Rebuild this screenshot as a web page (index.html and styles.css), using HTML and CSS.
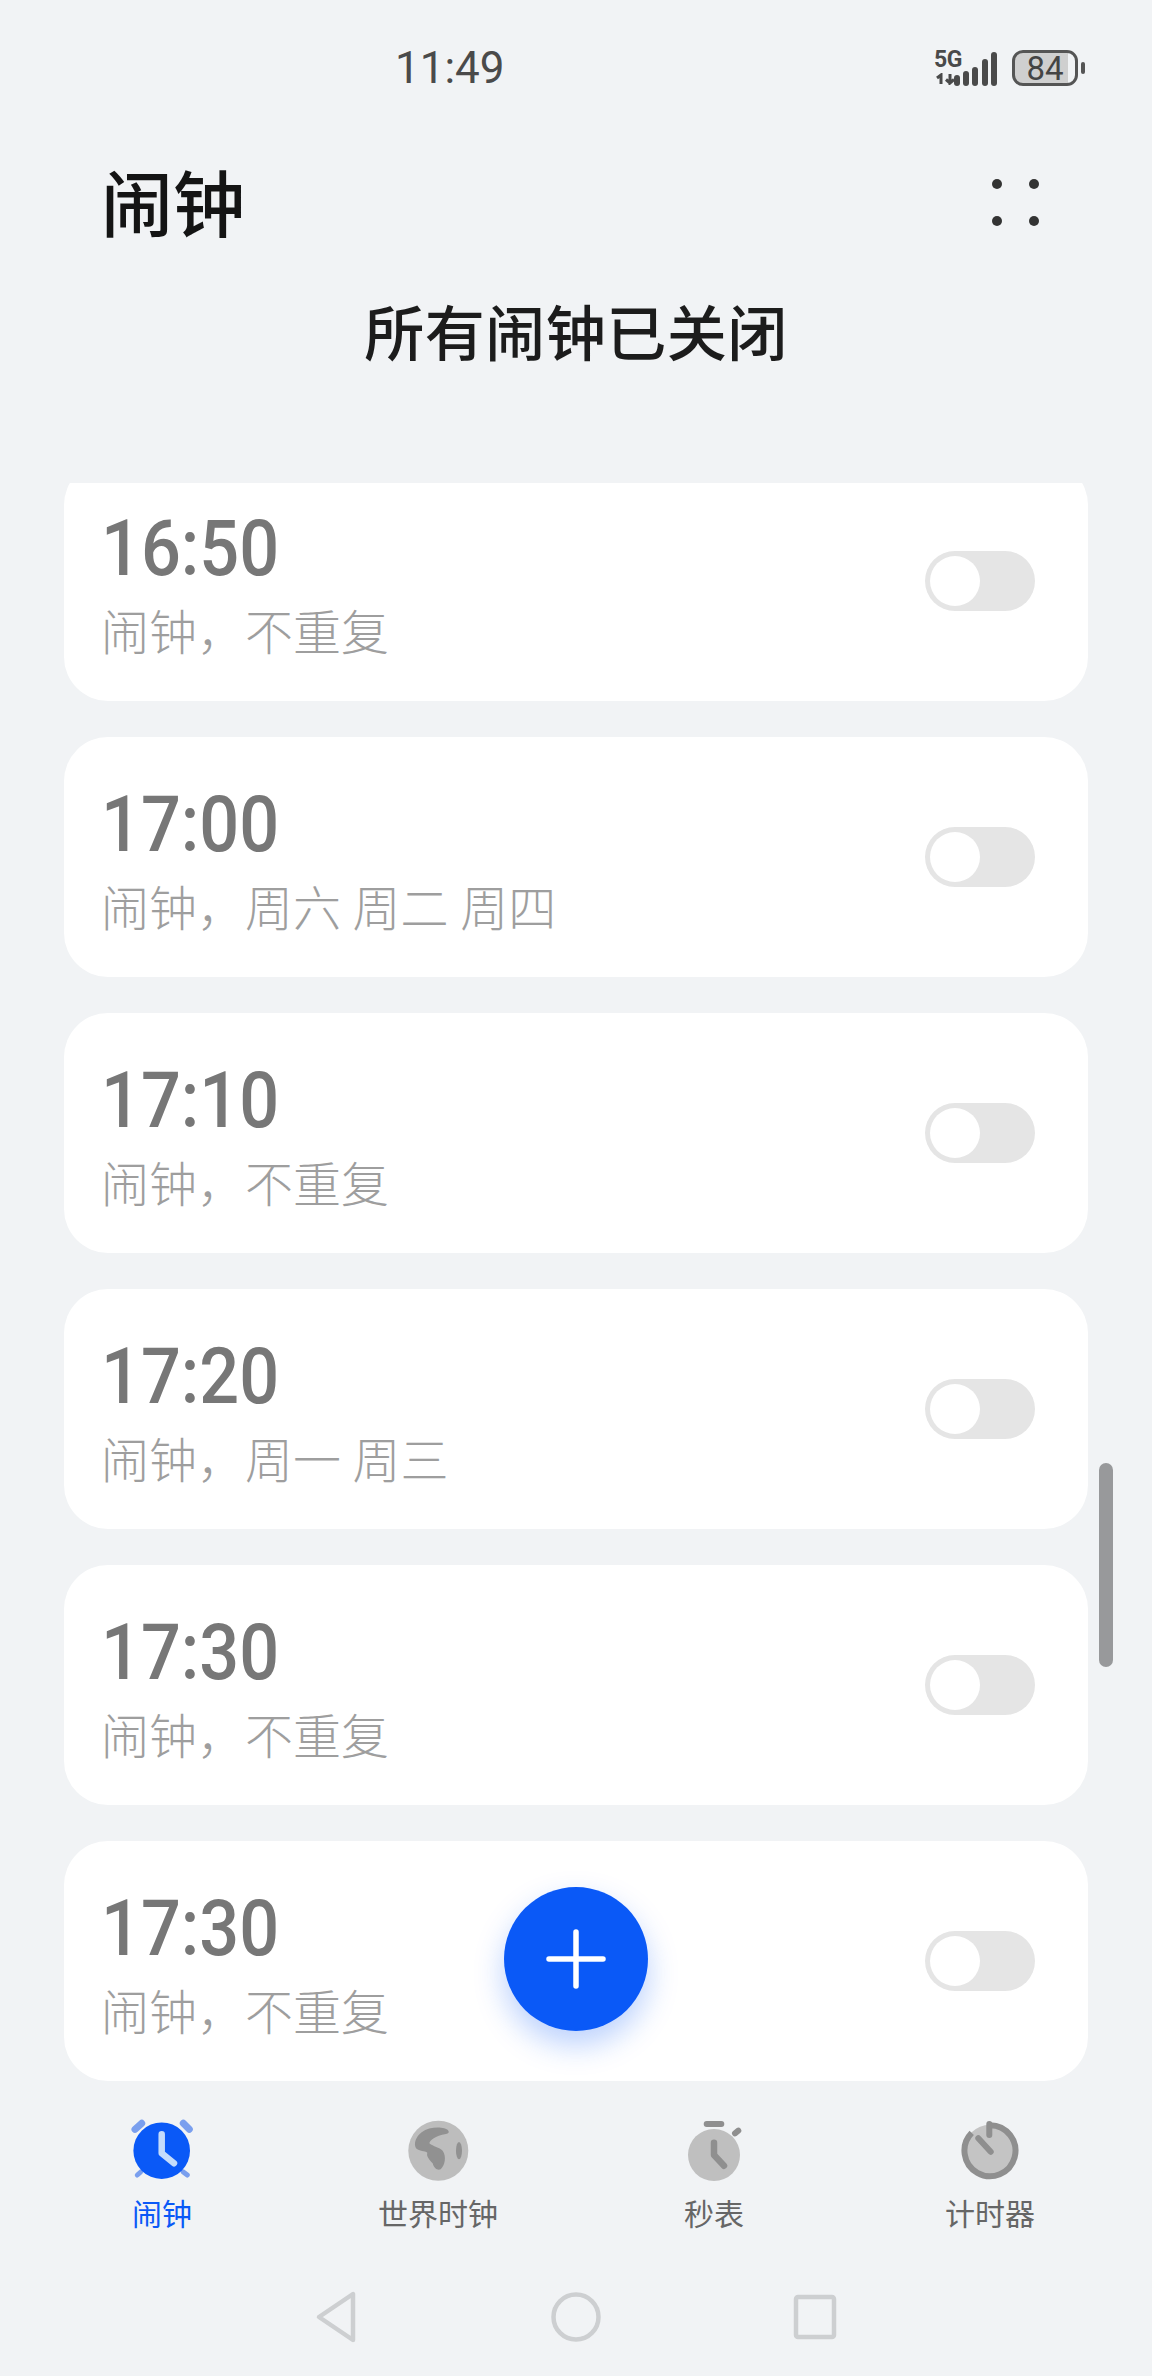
FILE: index.html
```html
<!DOCTYPE html>
<html lang="zh-CN">
<head>
  <meta charset="UTF-8">
  <meta name="viewport" content="width=device-width, initial-scale=1.0">
  <title>闹钟</title>
  <link rel="stylesheet" href="styles.css">
</head>

<body>
  <div class="phone">

    <div class="status-bar">
      <span class="status-time">11:49</span>
      <div class="status-icons">
        <div class="network">
          <span class="network-label">5G</span>
          <svg class="network-arrows" width="24" height="12" viewBox="0 0 24 12">
            <path d="M7 11V2L3 5M16 1v9l4-3.500M16 10l-4-3.500" fill="none" stroke="#4a4a4a" stroke-width="3"/>
          </svg>
        </div>
        <svg class="signal" width="44" height="34" viewBox="0 0 44 34">
          <rect x="0" y="23" width="6" height="11" rx="3"/>
          <rect x="9" y="19" width="6" height="15" rx="3"/>
          <rect x="18" y="15" width="6" height="19" rx="3"/>
          <rect x="28" y="7" width="6" height="27" rx="3"/>
          <rect x="37" y="0" width="6" height="34" rx="3"/>
        </svg>
        <div class="battery"><span>84</span></div>
        <div class="battery-cap"></div>
      </div>
    </div>

    <div class="app-header">
      <h1>闹钟</h1>
      <div class="more-dots">
        <i></i><i></i><i></i><i></i>
      </div>
    </div>

    <div class="summary">所有闹钟已关闭</div>

    <div class="alarm-list">
      <div class="alarm-card first-card">
        <div class="alarm-info">
          <div class="alarm-time">16:50</div>
          <div class="alarm-repeat">闹钟，不重复</div>
        </div>
        <div class="toggle"><i></i></div>
      </div>
      <div class="alarm-card">
        <div class="alarm-info">
          <div class="alarm-time">17:00</div>
          <div class="alarm-repeat">闹钟，周六 周二 周四</div>
        </div>
        <div class="toggle"><i></i></div>
      </div>
      <div class="alarm-card">
        <div class="alarm-info">
          <div class="alarm-time">17:10</div>
          <div class="alarm-repeat">闹钟，不重复</div>
        </div>
        <div class="toggle"><i></i></div>
      </div>
      <div class="alarm-card">
        <div class="alarm-info">
          <div class="alarm-time">17:20</div>
          <div class="alarm-repeat">闹钟，周一 周三</div>
        </div>
        <div class="toggle"><i></i></div>
      </div>
      <div class="alarm-card">
        <div class="alarm-info">
          <div class="alarm-time">17:30</div>
          <div class="alarm-repeat">闹钟，不重复</div>
        </div>
        <div class="toggle"><i></i></div>
      </div>
      <div class="alarm-card">
        <div class="alarm-info">
          <div class="alarm-time">17:30</div>
          <div class="alarm-repeat">闹钟，不重复</div>
        </div>
        <div class="toggle"><i></i></div>
      </div>
    </div>

    <div class="tab-bar">
      <div class="tab tab-active">
        <svg class="tab-icon" viewBox="0 0 80 80">
          <g fill="none" stroke="#7a9fee" stroke-linecap="round">
            <path d="M13 19.300L19.700 13.300M61.300 13.300L67.300 19.300" stroke-width="7"/>
            <path d="M15.300 65L18.700 62M65.300 65L61.300 62" stroke-width="5"/>
          </g>
          <circle cx="39.700" cy="40.700" r="28.300" fill="#0a59f7"/>
          <path d="M39.700 24.300V43.300L52 53.300" fill="none" stroke="#c5dcfb" stroke-width="6.500" stroke-linecap="round" stroke-linejoin="round"/>
        </svg>
        <span>闹钟</span>
      </div>
      <div class="tab">
        <svg class="tab-icon" viewBox="0 0 80 80">
          <circle cx="40.300" cy="40.700" r="30" fill="#bdbdbd"/>
          <g transform="translate(-18 -10) scale(.3333)" fill="#919191">
            <path d="M205 92C195 80 150 78 125 97C108 110 100 130 108 145C118 155 135 152 142 158C138 170 150 180 158 190C162 205 172 212 182 208C195 195 200 170 188 152C178 142 160 140 148 130C150 120 165 108 198 102C206 100 208 96 205 92Z"/>
            <ellipse cx="237" cy="152" rx="9" ry="26"/>
          </g>
        </svg>
        <span>世界时钟</span>
      </div>
      <div class="tab">
        <svg class="tab-icon" viewBox="0 0 80 80">
          <circle cx="40" cy="45" r="26" fill="#bfbfbf"/>
          <g fill="none" stroke="#8f8f8f" stroke-linecap="round" stroke-linejoin="round">
            <path d="M32.700 14H47.300" stroke-width="6"/>
            <path d="M61 23.300L64.300 20.700" stroke-width="6"/>
            <path d="M40 32.700V45L50 55.700" stroke-width="6.500"/>
          </g>
        </svg>
        <span>秒表</span>
      </div>
      <div class="tab">
        <svg class="tab-icon" viewBox="0 0 80 80">
          <circle cx="40" cy="40.700" r="26" fill="#c4c4c4"/>
          <g fill="none" stroke="#8f8f8f" stroke-width="6">
            <path d="M40 15.200A25.500 25.500 0 1 1 21.700 22.900"/>
            <path d="M39.300 14V25" stroke-linecap="round"/>
            <path d="M28.300 28.300L40.700 41.700" stroke-linecap="round"/>
          </g>
        </svg>
        <span>计时器</span>
      </div>
    </div>

    <div class="system-nav">
      <svg width="44" height="54" viewBox="0 0 44 54">
        <path d="M38 4V50L4 27Z" fill="none" stroke="#cdcfd1" stroke-width="4.500" stroke-linejoin="round"/>
      </svg>
      <svg width="50" height="50" viewBox="0 0 50 50">
        <circle cx="25" cy="25" r="22.500" fill="none" stroke="#cdcfd1" stroke-width="4.500"/>
      </svg>
      <svg width="44" height="46" viewBox="0 0 44 46">
        <rect x="3" y="3" width="38" height="40" rx="2" fill="none" stroke="#cdcfd1" stroke-width="4.500"/>
      </svg>
    </div>

    <!-- these two float over the list -->
    <div class="scroll-thumb"></div>
    <div class="add-button">
      <svg width="60" height="60" viewBox="0 0 60 60">
        <path d="M3 30H57M30 3V57" stroke="#fff" stroke-width="5.500" stroke-linecap="round"/>
      </svg>
    </div>

  </div>
</body>
</html>
```

FILE: styles.css
```css
* {
  box-sizing: border-box;
}

body {
  margin: 0;
  background-color: #f1f3f5;
  font-family: "Noto Sans CJK SC", "Noto Sans", sans-serif;
}

.phone {
  position: relative;
  width: 1152px;
  height: 2376px;
  overflow: hidden;
  display: flex;
  flex-direction: column;
}

/* status bar */
.status-bar {
  height: 140px;
  padding: 46px 67px 0 395px;
  display: flex;
  justify-content: space-between;
  align-items: flex-start;
  color: #4a4a4a;
}

.status-time {
  font-family: Roboto, sans-serif;
  font-size: 44px;
  line-height: 44px;
}

.status-icons {
  display: flex;
  align-items: flex-start;
  margin-top: 4px;
}

.network {
  width: 26px;
  margin-right: -6px;
  display: flex;
  flex-direction: column;
}

.network-label {
  font-family: "Liberation Sans Narrow", Roboto, sans-serif;
  font-size: 23px;
  font-weight: 700;
  line-height: 20px;
  letter-spacing: -0.5px;
}

.network-arrows {
  margin-top: 3px;
}

.signal {
  margin: 2px 0 0 0;
  fill: #4a4a4a;
}

.battery {
  width: 66px;
  height: 36px;
  margin-left: 14px;
  border: 3.5px solid #555;
  border-radius: 11px;
  background: linear-gradient(to right, #cfcfcf 88%, transparent 88%);
  display: flex;
  align-items: center;
  justify-content: center;
  font-family: Roboto, sans-serif;
  font-size: 33px;
  color: #444;
}

.battery-cap {
  width: 4px;
  height: 12px;
  margin: 12px 0 0 3px;
  border-radius: 2px;
  background: #555;
}

/* title row */
.app-header {
  height: 122px;
  padding: 0 113px 0 101px;
  display: flex;
  justify-content: space-between;
  align-items: center;
}

.app-header h1 {
  margin: -3px 0 0;
  font-size: 72px;
  font-weight: 500;
  color: #141414;
}

.more-dots {
  margin-top: 3px;
  display: grid;
  grid-template-columns: 10px 10px;
  gap: 27px;
}

.more-dots i {
  width: 10px;
  height: 10px;
  border-radius: 50%;
  background: #333;
}

.summary {
  height: 221px;
  padding-top: 26px;
  text-align: center;
  font-size: 60px;
  font-weight: 500;
  line-height: 84px;
  letter-spacing: 0.5px;
  color: #1c1c1c;
}

/* alarms */
.alarm-list {
  height: 1598px;
  overflow: hidden;
  padding: 0 64px;
  display: flex;
  flex-direction: column;
  gap: 36px;
}

.alarm-card {
  flex: 0 0 240px;
  padding: 0 53px 0 37px;
  background: white;
  border-radius: 44px;
  display: flex;
  justify-content: space-between;
  align-items: center;
}

.first-card {
  margin-top: -22px;
}

.alarm-info {
  padding-top: 4px;
}

.alarm-time {
  font-family: Roboto, sans-serif;
  font-size: 78px;
  font-weight: 500;
  line-height: 88px;
  color: #777;
  transform: scaleX(0.9);
  transform-origin: left center;
}

.alarm-repeat {
  margin-top: 3px;
  font-size: 48px;
  font-weight: 300;
  line-height: 66px;
  word-spacing: 1px;
  color: #9e9e9e;
}

.toggle {
  width: 110px;
  height: 60px;
  padding: 5px;
  border-radius: 30px;
  background: #e5e5e5;
}

.toggle i {
  display: block;
  width: 50px;
  height: 50px;
  border-radius: 50%;
  background: white;
}

/* bottom tabs */
.tab-bar {
  height: 209px;
  padding: 29px 24px 0;
  display: grid;
  grid-template-columns: repeat(4, 1fr);
}

.tab {
  display: flex;
  flex-direction: column;
  align-items: center;
  font-size: 30px;
  line-height: 44px;
  color: #666;
}

.tab-icon {
  width: 80px;
  height: 80px;
}

.tab-active {
  color: #0a59f7;
}

.system-nav {
  padding: 0 315px;
  display: flex;
  justify-content: space-between;
  align-items: center;
}

/* floating bits */
.scroll-thumb {
  position: absolute;
  left: 1099px;
  top: 1463px;
  width: 14px;
  height: 204px;
  border-radius: 7px;
  background: #98999b;
}

.add-button {
  position: absolute;
  left: 504px;
  top: 1887px;
  width: 144px;
  height: 144px;
  border-radius: 50%;
  background: #0a59f7;
  box-shadow: 0 14px 30px rgba(10, 89, 247, 0.28);
  display: flex;
  align-items: center;
  justify-content: center;
}
```
